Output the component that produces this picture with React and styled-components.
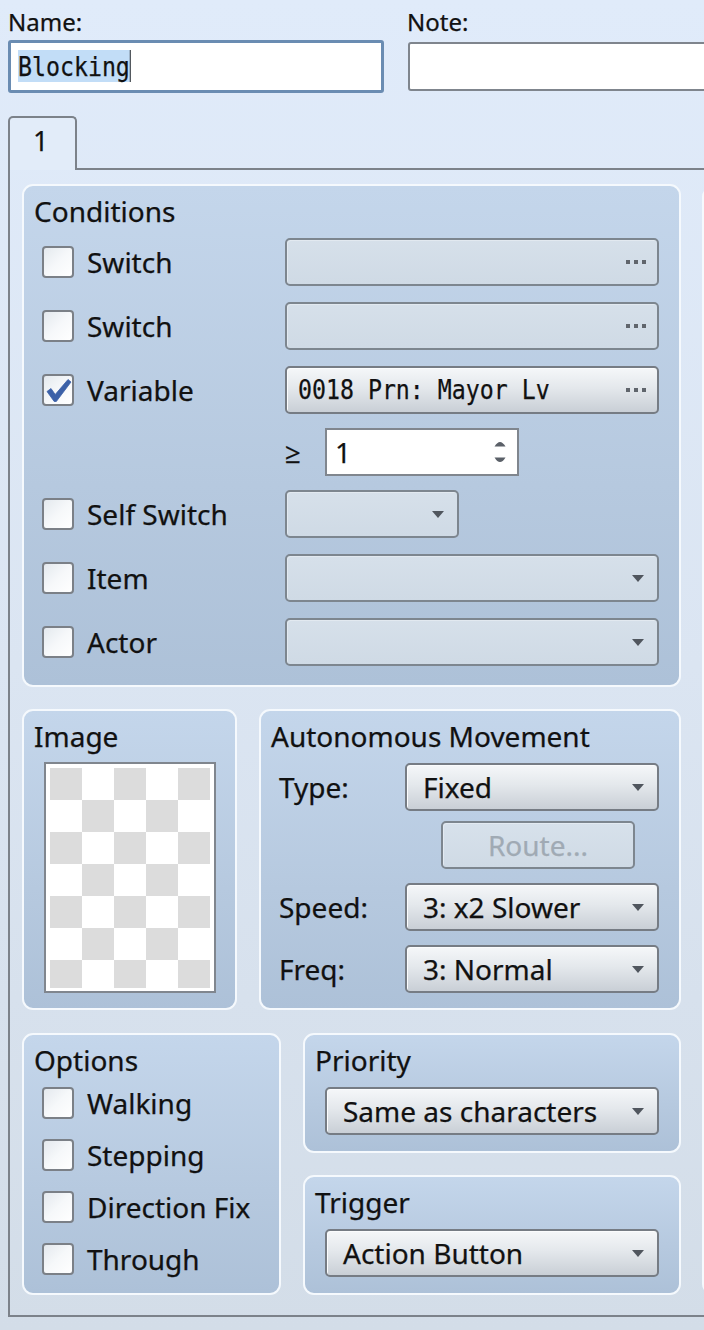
import React from 'react';
import styled, { createGlobalStyle } from 'styled-components';

const GlobalStyle = createGlobalStyle`
  html, body { margin: 0; padding: 0; }
  body {
    width: 704px;
    height: 1330px;
    overflow: hidden;
    background: linear-gradient(180deg, #e0ebfa 0%, #dbe5f2 50%, #d3dde8 100%);
    font-family: "Noto Sans", "Open Sans", sans-serif;
    color: #111;
    -webkit-text-stroke: 0.25px currentColor;
  }
`;

const Page = styled.div`
  width: 1120px;
  box-sizing: border-box;
  padding: 8px 0 0 8px;
`;

const Header = styled.div`
  display: grid;
  grid-template-columns: 376px 1fr;
  column-gap: 23px;
`;

const FieldCol = styled.div`
  display: flex;
  flex-direction: column;
`;

const FieldLabel = styled.div`
  font-size: 24px;
  line-height: 28px;
  height: 32px;
`;

const TextInput = styled.div`
  box-sizing: border-box;
  height: ${p => (p.$focused ? 53 : 49)}px;
  margin: ${p => (p.$focused ? '0' : '2px 0 2px 1px')};
  border: ${p => (p.$focused ? '3px solid #6a8cb2' : '2px solid #7f858d')};
  border-radius: 3px;
  background: #fff;
  display: flex;
  align-items: center;
  padding-left: 7px;
`;

const Mono = styled.span`
  display: inline-block;
  font-family: "DejaVu Sans Mono", "Liberation Mono", monospace;
  font-size: 27px;
  line-height: 28px;
  white-space: nowrap;
  transform: scaleX(0.86);
  transform-origin: left center;
`;

const Selected = styled.span`
  background: #c2ddf7;
  border-right: 1.5px solid #111;
  padding-top: 1px;
`;

const TabStrip = styled.div`
  display: flex;
  height: 54px;
  margin-top: 23px;
`;

const Tab = styled.div`
  width: 69px;
  box-sizing: border-box;
  border: 2px solid #7c828a;
  border-bottom: none;
  border-radius: 5px 5px 0 0;
  background: #e2ecf9;
  font-size: 27px;
  line-height: 46px;
  padding-left: 23px;
`;

const TabRest = styled.div`
  flex: 1;
  border-bottom: 2px solid #7c828a;
`;

const Panel = styled.div`
  display: flex;
  gap: 21px;
  border-left: 2px solid #7c828a;
  border-bottom: 2px solid #7c828a;
  padding: 14px 0 20px 12px;
`;

const Column = styled.div`
  width: ${p => p.$w}px;
  display: flex;
  flex-direction: column;
  gap: ${p => p.$gap || 0}px;
`;

const Row = styled.div`
  display: flex;
  gap: 22px;
  margin-top: ${p => p.$mt || 0}px;
`;

const Group = styled.section`
  box-sizing: border-box;
  width: ${p => (p.$w ? `${p.$w}px` : 'auto')};
  height: ${p => (p.$h ? `${p.$h}px` : 'auto')};
  border: 2px solid #f5f9fd;
  border-radius: 11px;
  background: linear-gradient(180deg, #c4d6eb 0%, #b6c9df 60%, #adc1d8 100%);
  padding: 6px 20px 0 10px;
`;

const SideGroup = styled.section`
  flex: 1;
  box-sizing: border-box;
  margin-top: 2px;
  border: 2px solid #f5f9fd;
  border-radius: 11px;
  background: #dfe8f3;
`;

const GroupTitle = styled.div`
  font-size: 28px;
  line-height: 38px;
  height: 38px;
  white-space: nowrap;
`;

const CondList = styled.div`
  display: flex;
  flex-direction: column;
  gap: 16px;
  margin-top: 8px;
  padding-left: 8px;
`;

const CondRow = styled.div`
  display: grid;
  grid-template-columns: 243px 1fr;
  align-items: center;
  height: 48px;
  margin: ${p => (p.$tight ? '-2px 0' : '0')};
`;

const CheckItem = styled.label`
  display: flex;
  align-items: center;
  gap: 13px;
  font-size: 28px;
  height: 32px;
  white-space: nowrap;
`;

const Box = styled.span`
  width: 32px;
  height: 32px;
  flex: none;
  box-sizing: border-box;
  border: 2px solid #7b8087;
  border-radius: 4px;
  background: linear-gradient(135deg, #e4e9ee 0%, #f6f8fa 50%, #ffffff 100%);
  display: flex;
  align-items: center;
  justify-content: center;
`;

const Combo = styled.div`
  box-sizing: border-box;
  width: ${p => (p.$w ? `${p.$w}px` : '100%')};
  height: 48px;
  border: 2px solid ${p => (p.$disabled ? '#7d868f' : '#767c84')};
  border-radius: 5px;
  background: ${p =>
    p.$disabled
      ? 'linear-gradient(180deg, #d6e0ea 0%, #cfdae5 100%)'
      : 'linear-gradient(180deg, #f5f7f9 0%, #e4e8ec 45%, #c9cfd6 100%)'};
  box-shadow: inset 1px 1px 0 ${p => (p.$disabled ? '#e2e9f0' : '#fbfcfd')};
  display: flex;
  align-items: center;
  justify-content: space-between;
  padding: 0 11px 0 ${p => (p.$mono ? 11 : 16)}px;
  font-size: 28px;
  color: #111;
  white-space: nowrap;
  overflow: hidden;
`;

const Arrow = styled.span`
  width: 0;
  height: 0;
  margin-right: 2px;
  border-left: 6.5px solid transparent;
  border-right: 6.5px solid transparent;
  border-top: 7px solid #50565e;
  margin-left: auto;
`;

const Dots = styled.span`
  display: flex;
  gap: 4px;
  margin-left: auto;
  & > i {
    width: 4px;
    height: 4px;
    background: #60656c;
  }
`;

const GeCell = styled.div`
  display: flex;
  align-items: center;
`;

const GeSign = styled.span`
  width: 40px;
  font-size: 28px;
  line-height: 1;
`;

const Spin = styled.div`
  box-sizing: border-box;
  width: 194px;
  height: 48px;
  border: 2px solid #80868e;
  background: #fff;
  display: flex;
  align-items: center;
  justify-content: space-between;
  padding: 0 10px 0 8px;
  font-size: 28px;
`;

const SpinArrows = styled.span`
  display: flex;
  flex-direction: column;
  gap: 10px;
`;

const Frame = styled.div`
  width: 160px;
  margin: 7px 0 0 10px;
  border: 2px solid #80868e;
  background: #fff;
  padding: 4px 4px 3px 4px;
`;

const Checker = styled.div`
  width: 160px;
  height: 220px;
  background-color: #fff;
  background-image: conic-gradient(
    transparent 0 25%,
    #dcdcdc 0 50%,
    transparent 0 75%,
    #dcdcdc 0 100%
  );
  background-size: 64px 64px;
  background-position: 32px 32px;
`;

const MoveList = styled.div`
  display: flex;
  flex-direction: column;
  gap: 14px;
  margin-top: 8px;
  padding-left: 8px;
`;

const MoveRow = styled.div`
  display: grid;
  grid-template-columns: 126px 254px;
  align-items: center;
  height: 48px;
`;

const MoveLabel = styled.span`
  font-size: 28px;
`;

const RouteButton = styled.div`
  box-sizing: border-box;
  width: 194px;
  height: 48px;
  margin: -4px 0 0 162px;
  border: 2px solid #7d868f;
  border-radius: 5px;
  background: linear-gradient(180deg, #d7e1eb 0%, #cfdae5 100%);
  box-shadow: inset 1px 1px 0 #e3eaf1;
  color: #a0aab4;
  font-size: 28px;
  display: flex;
  align-items: center;
  justify-content: center;
`;

const OptionList = styled.div`
  display: flex;
  flex-direction: column;
  gap: 20px;
  margin-top: 8px;
  padding-left: 8px;
`;

const ComboWrap = styled.div`
  margin: 8px 0 0 10px;
`;

function CheckMark() {
  return (
    <svg width="28" height="28" viewBox="0 0 28 28">
      <path
        d="M3 15.5 L7 12.5 L11.2 18.5 L24 3.5 L27 6 L12.3 25.5 L10.2 25.5 Z"
        fill="#3c61a8"
        stroke="#3c61a8"
        strokeWidth="0.8"
        strokeLinejoin="round"
      />
    </svg>
  );
}

function Check({ label, checked }) {
  return (
    <CheckItem>
      <Box>{checked && <CheckMark />}</Box>
      {label}
    </CheckItem>
  );
}

function DotsIcon() {
  return (
    <Dots>
      <i />
      <i />
      <i />
    </Dots>
  );
}

function SpinIcon() {
  return (
    <SpinArrows>
      <svg width="14" height="8" viewBox="0 0 14 8">
        <path d="M1.5 7.5 Q7 -1.5 12.5 7.5 Z" fill="#5b6068" />
      </svg>
      <svg width="14" height="8" viewBox="0 0 14 8">
        <path d="M1.5 0.5 Q7 9.5 12.5 0.5 Z" fill="#5b6068" />
      </svg>
    </SpinArrows>
  );
}

export default function App() {
  return (
    <>
      <GlobalStyle />
      <Page>
        <Header>
          <FieldCol>
            <FieldLabel>Name:</FieldLabel>
            <TextInput $focused>
              <Mono>
                <Selected>Blocking</Selected>
              </Mono>
            </TextInput>
          </FieldCol>
          <FieldCol>
            <FieldLabel>Note:</FieldLabel>
            <TextInput />
          </FieldCol>
        </Header>

        <TabStrip>
          <Tab>1</Tab>
          <TabRest />
        </TabStrip>

        <Panel>
          <Column $w={659}>
            <Group $h={503}>
              <GroupTitle>Conditions</GroupTitle>
              <CondList>
                <CondRow>
                  <Check label="Switch" />
                  <Combo $disabled>
                    <DotsIcon />
                  </Combo>
                </CondRow>
                <CondRow>
                  <Check label="Switch" />
                  <Combo $disabled>
                    <DotsIcon />
                  </Combo>
                </CondRow>
                <CondRow>
                  <Check label="Variable" checked />
                  <Combo $mono>
                    <Mono>0018 Prn: Mayor Lv</Mono>
                    <DotsIcon />
                  </Combo>
                </CondRow>
                <CondRow $tight>
                  <span />
                  <GeCell>
                    <GeSign>≥</GeSign>
                    <Spin>
                      <span>1</span>
                      <SpinIcon />
                    </Spin>
                  </GeCell>
                </CondRow>
                <CondRow>
                  <Check label="Self Switch" />
                  <Combo $disabled $w={174}>
                    <Arrow />
                  </Combo>
                </CondRow>
                <CondRow>
                  <Check label="Item" />
                  <Combo $disabled>
                    <Arrow />
                  </Combo>
                </CondRow>
                <CondRow>
                  <Check label="Actor" />
                  <Combo $disabled>
                    <Arrow />
                  </Combo>
                </CondRow>
              </CondList>
            </Group>

            <Row $mt={22}>
              <Group $w={215} $h={301}>
                <GroupTitle>Image</GroupTitle>
                <Frame>
                  <Checker />
                </Frame>
              </Group>
              <Group $w={422} $h={301}>
                <GroupTitle>Autonomous Movement</GroupTitle>
                <MoveList>
                  <MoveRow>
                    <MoveLabel>Type:</MoveLabel>
                    <Combo>
                      Fixed
                      <Arrow />
                    </Combo>
                  </MoveRow>
                  <RouteButton>Route...</RouteButton>
                  <MoveRow>
                    <MoveLabel>Speed:</MoveLabel>
                    <Combo>
                      3: x2 Slower
                      <Arrow />
                    </Combo>
                  </MoveRow>
                  <MoveRow>
                    <MoveLabel>Freq:</MoveLabel>
                    <Combo>
                      3: Normal
                      <Arrow />
                    </Combo>
                  </MoveRow>
                </MoveList>
              </Group>
            </Row>

            <Row $mt={23}>
              <Group $w={259} $h={262}>
                <GroupTitle>Options</GroupTitle>
                <OptionList>
                  <Check label="Walking" />
                  <Check label="Stepping" />
                  <Check label="Direction Fix" />
                  <Check label="Through" />
                </OptionList>
              </Group>
              <Column $w={378} $gap={22}>
                <Group $h={120}>
                  <GroupTitle>Priority</GroupTitle>
                  <ComboWrap>
                    <Combo>
                      Same as characters
                      <Arrow />
                    </Combo>
                  </ComboWrap>
                </Group>
                <Group $h={120}>
                  <GroupTitle>Trigger</GroupTitle>
                  <ComboWrap>
                    <Combo>
                      Action Button
                      <Arrow />
                    </Combo>
                  </ComboWrap>
                </Group>
              </Column>
            </Row>
          </Column>
          <Column $w={400}>
            <SideGroup />
          </Column>
        </Panel>
      </Page>
    </>
  );
}
